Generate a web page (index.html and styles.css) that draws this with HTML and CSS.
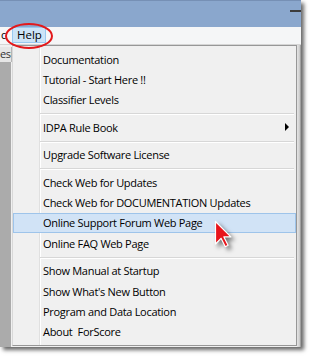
FILE: index.html
```html
<!DOCTYPE html>
<html lang="en">
<head>
    <meta charset="UTF-8">
    <meta name="viewport" content="width=device-width, initial-scale=1.0">
    <title>ForScore - Help Menu</title>
    <link rel="stylesheet" href="styles.css">
</head>
<body>
    <div class="window">
        <div class="titlebar">
            <span class="min-btn"></span>
        </div>
        <div class="menubar">
            <span class="mb-item cut">c</span>
            <span class="mb-item active">Help</span>
        </div>
        <div class="workspace">
            <div class="tabrow"><span class="tab">esu</span></div>
            <div class="pane"></div>
            <div class="frame-edge"></div>
        </div>

        <ul class="dropdown">
            <li class="item">Documentation</li>
            <li class="item">Tutorial - Start Here !!</li>
            <li class="item">Classifier Levels</li>
            <li class="sep"></li>
            <li class="item">IDPA Rule Book <span class="sub-arrow"></span></li>
            <li class="sep"></li>
            <li class="item">Upgrade Software License</li>
            <li class="sep"></li>
            <li class="item">Check Web for Updates</li>
            <li class="item">Check Web for DOCUMENTATION Updates</li>
            <li class="item hover">Online Support Forum Web Page</li>
            <li class="item">Online FAQ Web Page</li>
            <li class="sep"></li>
            <li class="item">Show Manual at Startup</li>
            <li class="item">Show What's New Button</li>
            <li class="item">Program and Data Location</li>
            <li class="item">About&nbsp; ForScore</li>
        </ul>

        <!-- annotation ring around the Help menu -->
        <svg class="ring" width="52" height="30" viewBox="0 0 52 30">
            <ellipse cx="26" cy="14" rx="23" ry="12" fill="none" stroke="#e3191b" stroke-width="2"/>
        </svg>

        <svg class="cursor" width="22" height="32" viewBox="0 0 22 32">
            <polygon points="1.5,1.5 1.5,24 7,18.3 11.3,26.7 14.1,25.3 9.9,16.9 16.9,16.9"
                     fill="#e8141b" stroke="#fff" stroke-width="1.2" stroke-linejoin="round"/>
        </svg>
    </div>
</body>
</html>
```

FILE: styles.css
```css
* {
    box-sizing: border-box;
}
body {
    margin: 0;
    width: 316px;
    height: 363px;
    background: #fff;
    font-family: "Open Sans", "Noto Sans", sans-serif;
    font-size: 11px;
    color: #000;
}
.window {
    position: relative;
    width: 301px;
    height: 347px;
    display: flex;
    flex-direction: column;
    background: #f0f0f0;
    box-shadow: 3px 3px 4px rgba(0,0,0,0.6);
}
.titlebar {
    height: 27px;
    background: #8aa7cd;
    border-top: 1px solid #7690b5;
    display: flex;
    justify-content: flex-end;
}
.min-btn {
    width: 11px;
    height: 2px;
    margin-top: 9px;
    background: #3c3c3c;
}
.menubar {
    height: 18px;
    background: #f5f6f7;
    border-bottom: 1px solid #d5d5d5;
    display: flex;
    align-items: flex-start;
}
.mb-item {
    height: 16px;
    line-height: 14px;
    border: 1px solid transparent;
}
.mb-item.cut {
    width: 12px;
    padding-left: 0;
}
.mb-item.active {
    width: 34px;
    padding-left: 4px;
    background: #cce4f7;
    border-color: #99c9ef;
    font-size: 11.5px;
}
.workspace {
    flex: 1;
    position: relative;
    display: flex;
    flex-direction: column;
}
.tabrow {
    height: 17px;
    background: #f0f0f0;
    padding-top: 2px;
}
.tab {
    display: block;
    width: 12px;
    height: 15px;
    overflow: hidden;
    background: #e6e6e6;
    border-right: 1px solid #b5b5b5;
    color: #333;
    line-height: 14px;
    letter-spacing: -0.5px;
    white-space: nowrap;
}
.pane {
    flex: 1;
    width: 11px;
    background: #ababab;
}
.frame-edge {
    position: absolute;
    right: 0;
    top: 0;
    bottom: 0;
    width: 4px;
    background: linear-gradient(to right, #e4e4e4, #d0d0d0 60%, #8a8a8a);
}
.dropdown {
    position: absolute;
    left: 12px;
    top: 45px;
    width: 285px;
    height: 301px;
    margin: 0;
    padding: 3px 0 0;
    list-style: none;
    border: 1px solid #979797;
    border-left-color: #d8d8d8;
    background:
        linear-gradient(to right, transparent 26px, #e0e0e0 26px, #e0e0e0 27px, #fff 27px, #fff 28px, transparent 28px),
        #f0f0f0;
}
.item {
    height: 20.4px;
    padding-left: 29px;
    padding-right: 6px;
    border: 1px solid transparent;
    display: flex;
    align-items: center;
    justify-content: space-between;
    white-space: nowrap;
    letter-spacing: -0.3px;
}
.item.hover {
    background: #d1e3f6;
    border-color: #9ec4ea;
}
.sub-arrow {
    width: 0;
    height: 0;
    border-left: 4px solid #000;
    border-top: 4px solid transparent;
    border-bottom: 4px solid transparent;
}
.sep {
    height: 0;
    margin: 3px 2px 2px 27px;
    border-top: 1px solid #d7d7d7;
    border-bottom: 1px solid #fff;
}
.ring {
    position: absolute;
    left: 3px;
    top: 22px;
}
.cursor {
    position: absolute;
    left: 214px;
    top: 220px;
    filter: drop-shadow(3px 3px 2px rgba(0,0,0,0.5));
}
```
